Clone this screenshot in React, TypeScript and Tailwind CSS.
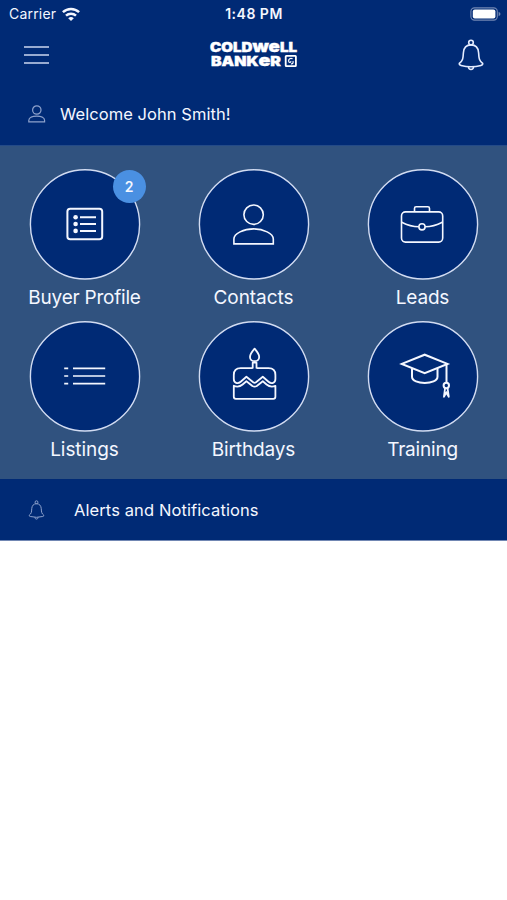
import type { ReactNode } from 'react'
import clsx from 'clsx'

type Tile = { label: string; icon: ReactNode; badge?: number; spacing: string }

// tile icons are drawn on the full 110x110 face of the circle
const tiles: Tile[] = [
  {
    label: 'Buyer Profile',
    badge: 2,
    spacing: 'tracking-[-0.22px]',
    icon: (
      <g strokeWidth="2">
        <rect x="37.4" y="39.3" width="34.8" height="30.4" rx="2.8" />
        <path d="M50 47.8H66M50 54.5H66M50 61.4H66" />
        <g fill="currentColor" stroke="none">
          <circle cx="45.6" cy="47.8" r="2.3" />
          <circle cx="45.6" cy="54.5" r="2.3" />
          <circle cx="45.6" cy="61.4" r="2.3" />
        </g>
      </g>
    ),
  },
  {
    label: 'Contacts',
    spacing: 'tracking-[-0.05px]',
    icon: (
      <g strokeWidth="1.6">
        <circle cx="54.6" cy="45.2" r="9.7" />
        <path d="M34.9 74.4V69.5C34.9 64 44.8 59.4 54.6 59.4S74.3 64 74.3 69.5V74.4Z" />
      </g>
    ),
  },
  {
    label: 'Leads',
    spacing: 'tracking-[-0.2px]',
    icon: (
      <g strokeWidth="1.6" transform="translate(-.4 0)">
        <rect x="33.9" y="42.4" width="41.2" height="30.2" rx="4" />
        <path d="M46.9 42.4V38.9Q46.9 37.3 48.5 37.3H60.3Q61.9 37.3 61.9 38.9V42.4" />
        <path d="M34.1 52.7Q42.7 57.2 51.3 57.2M57.5 57.2Q66.1 57.2 74.7 52.7" />
        <circle cx="54.4" cy="57.3" r="3.1" />
      </g>
    ),
  },
  {
    label: 'Listings',
    spacing: 'tracking-[-0.05px]',
    icon: (
      <path strokeWidth="1.7" d="M34.2 46.8H38.2M34.2 54.5H38.2M34.2 62.2H38.2M43 46.8H75.2M43 54.5H75.2M43 62.2H75.2" />
    ),
  },
  {
    label: 'Birthdays',
    spacing: 'tracking-[-0.15px]',
    icon: (
      <g strokeWidth="1.8" strokeLinejoin="round" transform="translate(-.8 0)">
        <path d="M56.4 27.2C59 30.2 61 32.8 61 35.4C61 38 59 39.7 56.4 39.7S51.8 38 51.8 35.4C51.8 32.8 53.8 30.2 56.4 27.2Z" />
        <path d="M54.5 47V41.2H58.3V47" />
        <path d="M54.5 46.7H42.5Q35.6 46.7 35.6 53.5V57.5C35.6 61.5 39.5 62.8 42.5 60.2L48.2 55.3L55 60.8Q56.4 61.8 57.8 60.8L64.6 55.3L70.3 60.2C73.3 62.8 77.2 61.5 77.2 57.5V53.5Q77.2 46.7 70.3 46.7H58.3" />
        <path d="M35.6 64.3V75.3Q35.6 77.3 37.6 77.3H75.2Q77.2 77.3 77.2 75.3V64.3C73.5 65.8 71 65.2 68.4 63L64.6 59.7L58.6 64.5Q56.4 65.8 54.2 64.5L48.2 59.7L44.4 63C41.8 65.2 39.3 65.8 35.6 64.3Z" />
      </g>
    ),
  },
  {
    label: 'Training',
    spacing: 'tracking-[-0.2px]',
    icon: (
      <g strokeWidth="2" transform="translate(-.5 0)">
        <path d="M34.3 42.4L57.2 33.2L80 42.4L57.2 51.6Z" />
        <path d="M44.5 46.8V55.2C44.5 63.6 70 63.6 70 55.2V46.8" />
        <path d="M79 42.5V61.2" />
        <circle cx="78.8" cy="64" r="2.7" />
        <path d="M77.6 66.5L76.3 76M80 66.5L81.4 76M76.3 75.5L78.8 71L81.4 75.5" strokeWidth="1.8" />
      </g>
    ),
  },
]

function Bell({ className }: { className?: string }) {
  return (
    <svg viewBox="0 0 26 32" className={className} fill="none" stroke="currentColor" strokeWidth="1.6" strokeLinejoin="round">
      <circle cx="13" cy="3.6" r="2.3" />
      <path d="M13 5.9C8.2 5.9 5.7 9.3 5.4 13.8C5.1 19.6 4.8 21.6 1.3 24.4Q1.2 26.2 3 26.4Q13 29 23 26.4Q24.8 26.2 24.7 24.4C21.2 21.6 20.9 19.6 20.6 13.8C20.3 9.3 17.8 5.9 13 5.9Z" />
      <path d="M10.4 27.8C10.7 31.4 15.3 31.4 15.6 27.8" />
    </svg>
  )
}

function StatusBar() {
  return (
    <div className="grid h-[27px] grid-cols-3 items-center pl-[9px] pr-[6px] text-[14px]">
      <div className="flex items-center gap-[6px]">
        <span className="tracking-[0.2px]">Carrier</span>
        <svg viewBox="0 0 18 14" className="h-[14px] w-[18px]" fill="none" stroke="currentColor" strokeWidth="2.5">
          <path d="M.9 5.1C5.5.8 12.5.8 17.1 5.1" />
          <path d="M4 8.6C6.8 6 11.2 6 14 8.6" />
          <path d="M9 14L6.2 11.2Q9 9 11.8 11.2Z" fill="currentColor" stroke="none" />
        </svg>
      </div>
      <div className="pr-[2px] text-center font-semibold tracking-[0.5px]">1:48 PM</div>
      <svg viewBox="0 0 31 14" className="h-[14px] w-[31px] justify-self-end" fill="none">
        <rect x=".9" y=".9" width="26.4" height="12.2" rx="3.6" stroke="#7187b3" strokeWidth="1.1" />
        <rect x="2.8" y="2.6" width="22.6" height="8.8" rx="2" fill="#fff" />
        <path d="M28.6 4.7Q30.5 5.4 30.5 7T28.6 9.3Z" fill="#7187b3" />
      </svg>
    </div>
  )
}

function Logo() {
  return (
    <svg viewBox="0 0 88 28" className="h-[28px] w-[88px] overflow-visible" fill="#fff" stroke="#fff" strokeWidth=".4" fontFamily="Inter, sans-serif" fontWeight="900" fontSize="13">
      <text x="0" y="11.2" textLength="87" lengthAdjust="spacingAndGlyphs">
        COLD<tspan fontSize="16">we</tspan>LL
      </text>
      <text x="1" y="24.7" textLength="70" lengthAdjust="spacingAndGlyphs">
        BANK<tspan fontSize="16">e</tspan>R
      </text>
      <rect x="75.7" y="14.9" width="10.2" height="10.2" rx=".6" fill="none" strokeWidth="1.8" />
      <path d="M82.6 17.8C80.4 16.6 78.4 18 78.6 20S80.4 21.6 81.2 20.4M81 22.8C82.6 23.2 83.8 21.6 82.8 20.2" fill="none" strokeWidth="1.2" />
    </svg>
  )
}

function TileButton({ tile }: { tile: Tile }) {
  return (
    <button className="flex h-[152px] flex-col items-center">
      <span className="relative block h-[110px] w-[110px]">
        <svg viewBox="0 0 110 110" className="h-full w-full overflow-visible" fill="none" stroke="currentColor">
          <circle cx="55" cy="55.4" r="54.6" fill="#002a75" stroke="#d2dcf2" strokeWidth="1.4" />
          <g transform="translate(0 .5)">{tile.icon}</g>
        </svg>
        {tile.badge && (
          <span className="absolute left-[83px] top-[0.5px] flex h-[33px] w-[33px] items-center justify-center rounded-full bg-[#4a90e2] text-[14px] font-semibold">
            {tile.badge}
          </span>
        )}
      </span>
      <span className={clsx('mt-[6px] text-[19px] leading-[26px]', tile.spacing)}>{tile.label}</span>
    </button>
  )
}

export default function App() {
  return (
    <div className="min-h-[900px] bg-white font-['Inter',sans-serif] text-[#f4f7ff]">
      <header className="h-[145px] bg-[#002a75]">
        <StatusBar />
        <div className="flex h-[56px] items-center justify-between pl-[24px] pr-[23px]">
          <svg viewBox="0 0 25 20" className="h-[20px] w-[25px]" stroke="#cad6ef" strokeWidth="1.7">
            <path d="M0 2H25M0 10H25M0 18H25" />
          </svg>
          <Logo />
          <Bell className="h-[32px] w-[26px] text-[#e4ecff]" />
        </div>
        <div className="flex h-[62px] items-center pl-[28px]">
          <svg viewBox="0 0 18 18" className="h-[18px] w-[18px]" fill="none" stroke="#8ea2cc" strokeWidth="1.2">
            <circle cx="8.8" cy="5" r="4.2" />
            <path d="M.8 16.8V15.4C.8 9.6 16.6 9.6 16.6 15.4V16.8Z" />
          </svg>
          <span className="ml-[14px] pt-px text-[16.5px] tracking-[0.06px]">Welcome John Smith!</span>
        </div>
      </header>

      <main className="grid h-[334px] grid-cols-3 content-start border-t border-[#234a88] bg-[#30527f] pt-[23px]">
        {tiles.map((t) => (
          <TileButton key={t.label} tile={t} />
        ))}
      </main>

      <div className="flex h-[62px] items-center border-b border-[#7187b3] bg-[#002a75] pl-[28px]">
        <Bell className="h-[20px] w-[17px] text-[#8ea2cc]" />
        <span className="ml-[29px] pt-[2px] text-[16.5px] tracking-[0.1px]">Alerts and Notifications</span>
      </div>
    </div>
  )
}
